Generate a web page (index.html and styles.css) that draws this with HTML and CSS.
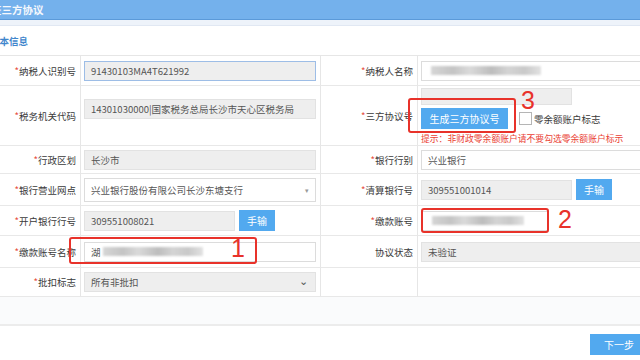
FILE: index.html
```html
<!DOCTYPE html>
<html lang="zh-CN">
<head>
    <meta charset="UTF-8">
    <meta name="viewport" content="width=device-width, initial-scale=1.0">
    <title>签三方协议</title>
    <link rel="stylesheet" href="styles.css">
</head>
<body>
    <!-- Titel balk -->
    <div class="titlebar"><span class="title">签三方协议</span></div>
    <div class="subbar"></div>
    <div class="section"><span class="section-title">基本信息</span></div>

    <!-- Formulier -->
    <div class="form">
        <div class="label"><i>*</i>纳税人识别号</div>
        <div class="field left"><div class="input gray focus">91430103MA4T621992</div></div>
        <div class="label"><i>*</i>纳税人名称</div>
        <div class="field right"><div class="input wide"><span class="blur b1"></span></div></div>

        <div class="label"><i>*</i>税务机关代码</div>
        <div class="field left top"><div class="input gray">14301030000|国家税务总局长沙市天心区税务局</div></div>
        <div class="label"><i>*</i>三方协议号</div>
        <div class="field right stack">
            <div class="input gray short thin"></div>
            <div class="btn-row">
                <button class="btn gen">生成三方协议号</button>
                <span class="check"></span>
                <span class="check-text">零余额账户标志</span>
            </div>
            <div class="note">提示：非财政零余额账户请不要勾选零余额账户标示</div>
        </div>

        <div class="label"><i>*</i>行政区划</div>
        <div class="field left"><div class="input gray">长沙市</div></div>
        <div class="label"><i>*</i>银行行别</div>
        <div class="field right"><div class="input wide">兴业银行</div></div>

        <div class="label"><i>*</i>银行营业网点</div>
        <div class="field left"><div class="input select tall">兴业银行股份有限公司长沙东塘支行<span class="caret">▾</span></div></div>
        <div class="label"><i>*</i>清算银行号</div>
        <div class="field right"><div class="input gray short">309551001014</div><button class="btn hand">手输</button></div>

        <div class="label"><i>*</i>开户银行行号</div>
        <div class="field left"><div class="input gray mid">309551008021</div><button class="btn hand">手输</button></div>
        <div class="label"><i>*</i>缴款账号</div>
        <div class="field right"><div class="input acct"><span class="blur b2"></span></div></div>

        <div class="label"><i>*</i>缴款账号名称</div>
        <div class="field left"><div class="input">湖<span class="blur b3"></span></div></div>
        <div class="label">协议状态</div>
        <div class="field right"><div class="input gray wide">未验证</div></div>

        <div class="label"><i>*</i>批扣标志</div>
        <div class="field left"><div class="input gray select">所有非批扣<span class="chev">⌄</span></div></div>
        <div class="label"></div>
        <div class="field right"></div>
    </div>

    <div class="band"></div>
    <div class="actions"><button class="btn next">下一步</button></div>

    <!-- Rode markeringen -->
    <div class="mark m1"></div><span class="num n1">1</span>
    <div class="mark m2"></div><span class="num n2">2</span>
    <div class="mark m3"></div><span class="num n3">3</span>
</body>
</html>
```

FILE: styles.css
```css
body {
    margin: 0;
    width: 640px;
    height: 360px;
    overflow: hidden;
    position: relative;
    background-color: #ffffff;
    font-family: "Noto Sans CJK SC", "Noto Sans", sans-serif;
    font-size: 9.5px;
    color: #3a3a3a;
}
.titlebar {
    height: 19px;
    background-color: #74b1ec;
    border-bottom: 1px solid #5b9ad9;
    display: flex;
    align-items: center;
}
.title {
    margin-left: -9px;
    color: #f4f8fd;
    font-size: 10.5px;
    font-weight: bold;
}
.subbar {
    height: 5px;
    background-color: #eef3fa;
    border-bottom: 1px solid #e1e8f3;
}
.section {
    height: 29px;
    display: flex;
    align-items: center;
}
.section-title {
    margin-left: -10px;
    color: #3f86cc;
    font-weight: bold;
    font-size: 9.5px;
}
.form {
    display: grid;
    grid-template-columns: 81px 240px 97px 1fr;
    grid-template-rows: 30px 60px 28px 32px 30px 32px 29px;
    border-top: 1px solid #e6e6e6;
}
.form > div {
    box-sizing: border-box;
    border-bottom: 1px solid #e8e8e8;
}
.label {
    display: flex;
    align-items: center;
    justify-content: flex-end;
    padding-right: 4px;
    border-right: 1px solid #e6e6e6;
    color: #3a3a3a;
    white-space: nowrap;
}
.label i {
    font-style: normal;
    color: #e64a3b;
}
.field {
    display: flex;
    align-items: center;
    gap: 4px;
}
.field.left {
    padding-left: 3px;
    padding-right: 3px;
    border-right: 1px solid #e6e6e6;
}
.field.right {
    padding-left: 3px;
}
.field.top {
    align-items: flex-start;
    padding-top: 13px;
}
.field.stack {
    flex-direction: column;
    align-items: flex-start;
    gap: 0;
    padding-top: 2px;
}
.input {
    box-sizing: border-box;
    width: 232px;
    height: 20px;
    border: 1px solid #dcdcdc;
    background-color: #ffffff;
    padding: 0 6px;
    display: flex;
    align-items: center;
    color: #555;
    white-space: nowrap;
    overflow: hidden;
    position: relative;
}
.input.gray {
    background-color: #eeeeee;
    border-color: #e2e2e2;
}
.input.focus {
    border-color: #9dbde6;
}
.input.wide {
    width: 230px;
}
.input.short {
    width: 151px;
}
.input.thin {
    height: 18px;
}
.input.mid {
    width: 151px;
}
.input.acct {
    width: 127px;
}
.input.tall {
    height: 24px;
}
.input.select {
    padding-right: 16px;
}
.caret {
    position: absolute;
    right: 6px;
    color: #999;
    font-size: 7px;
}
.chev {
    position: absolute;
    right: 7px;
    top: -1px;
    color: #555;
    font-size: 11px;
}
.blur {
    display: inline-block;
    height: 9px;
    background: linear-gradient(90deg, #d6d6d6 0%, #c4c4c4 20%, #dadada 35%, #bdbdbd 55%, #d4d4d4 70%, #c9c9c9 85%, #e2e2e2 100%);
    filter: blur(1.2px);
}
.b1 { width: 110px; margin-left: 3px; }
.b2 { width: 92px; margin-left: 4px; }
.b3 { width: 100px; margin-left: 2px; }
.btn {
    border: none;
    background-color: #52a9ef;
    color: #ffffff;
    font-family: "Noto Sans CJK SC", "Noto Sans", sans-serif;
    font-size: 10px;
    cursor: pointer;
    padding: 0;
}
.btn.hand {
    width: 36px;
    height: 21px;
}
.btn.gen {
    width: 87px;
    height: 21px;
}
.btn-row {
    display: flex;
    align-items: center;
    margin-top: 3px;
    height: 21px;
}
.check {
    width: 11px;
    height: 11px;
    border: 1px solid #b5b5b5;
    background-color: #fff;
    margin-left: 11px;
}
.check-text {
    margin-left: 2px;
    color: #3a3a3a;
}
.note {
    margin-top: 3px;
    color: #ea3f35;
    font-size: 8.8px;
    white-space: nowrap;
}
.band {
    height: 27px;
    background-color: #fafbfc;
    border-bottom: 2px solid #ececec;
}
.actions {
    display: flex;
    justify-content: flex-end;
    padding-top: 8px;
}
.btn.next {
    width: 50px;
    height: 21px;
    padding-left: 8px;
}
.mark {
    position: absolute;
    border: 2px solid #e8322a;
    border-radius: 3px;
}
.m1 { left: 69px; top: 237px; width: 184px; height: 23px; }
.m2 { left: 421px; top: 208px; width: 124px; height: 21px; }
.m3 { left: 408px; top: 98px; width: 104px; height: 31px; }
.num {
    position: absolute;
    color: #e8322a;
    font-family: "Liberation Sans", sans-serif;
    font-size: 25px;
    line-height: 1;
}
.n1 { left: 231px; top: 236px; }
.n2 { left: 558px; top: 207px; }
.n3 { left: 521px; top: 88px; }
```
